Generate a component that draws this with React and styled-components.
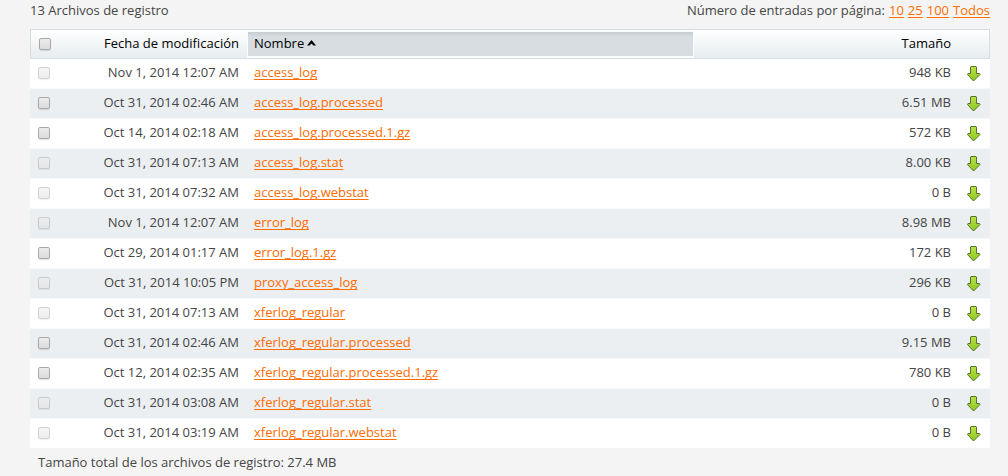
import React from "react";
import styled, { createGlobalStyle } from "styled-components";

const GlobalStyle = createGlobalStyle`
  body {
    margin: 0;
    background: #f4f4f4;
    color: #454545;
    font: 13px/18px "Trebuchet MS", "Open Sans", sans-serif;
  }
`;

const Page = styled.main`
  padding: 1px 18px 0 30px;
`;

const Toolbar = styled.div`
  display: flex;
  justify-content: space-between;
  margin-bottom: 10px;
`;

const Pager = styled.nav`
  display: flex;
  gap: 4px;
`;

const Link = styled.a`
  color: #ff6c00;
  text-decoration: underline;
  text-decoration-skip-ink: none;
  text-underline-offset: 2px;
`;

const Table = styled.table`
  width: 100%;
  table-layout: fixed;
  border-collapse: separate;
  border-spacing: 0;
`;

const Col = styled.col`
  width: ${(p) => p.$width};
`;

const HeadCell = styled.th`
  box-sizing: border-box;
  height: 30px;
  padding: 0 8px 2px 0;
  border: solid #d5dfe3;
  border-width: 1px 0;
  background: linear-gradient(#ffffff, #e7ecef);
  color: #000;
  font-weight: normal;
  text-align: ${(p) => p.$align || "right"};

  &:first-child {
    border-left-width: 1px;
    padding: 0 0 0 8px;
  }

  &:last-child {
    border-right-width: 1px;
  }
`;

const SortedCell = styled(HeadCell)`
  padding: 0;
`;

const SortButton = styled.button`
  display: flex;
  align-items: center;
  gap: 3px;
  box-sizing: border-box;
  width: 100%;
  height: 28px;
  padding: 0 0 2px 6px;
  border: solid #fafbfb;
  border-width: 2px 1px;
  background: linear-gradient(#c6cdd1, #d7dde1 5px);
  color: #000;
  font: inherit;
`;

const Row = styled.tr`
  background: ${(p) => (p.$striped ? "#ebeff2" : "#fff")};
`;

const Cell = styled.td`
  box-sizing: border-box;
  height: 30px;
  padding: ${(p) => p.$padding || "0 8px 3px 0"};
  border-top: 1px solid #f5f7f8;
  text-align: ${(p) => p.$align || "right"};

  tr:first-child > & {
    height: 29px;
    border-top: 0;
  }
`;

const Checkbox = styled.input`
  appearance: none;
  display: block;
  box-sizing: border-box;
  width: 12px;
  height: 12px;
  margin: 0;
  border: 1px solid #a8a8a8;
  border-radius: 2px;
  background: linear-gradient(#ececec, #dcdcdc);
  box-shadow: 0 1px 1px rgba(0, 0, 0, 0.12);

  &:checked {
    background: #666;
  }

  &:disabled {
    opacity: 0.5;
  }
`;

const DownloadButton = styled.button`
  display: block;
  padding: 0;
  border: 0;
  background: none;
`;

const Icon = styled.svg`
  display: block;
`;

const Summary = styled.p`
  margin: 0;
  padding: 5px 8px 0;
`;

const files = [
  ["Nov 1, 2014 12:07 AM", "access_log", "948 KB", true],
  ["Oct 31, 2014 02:46 AM", "access_log.processed", "6.51 MB", false],
  ["Oct 14, 2014 02:18 AM", "access_log.processed.1.gz", "572 KB", false],
  ["Oct 31, 2014 07:13 AM", "access_log.stat", "8.00 KB", true],
  ["Oct 31, 2014 07:32 AM", "access_log.webstat", "0 B", true],
  ["Nov 1, 2014 12:07 AM", "error_log", "8.98 MB", true],
  ["Oct 29, 2014 01:17 AM", "error_log.1.gz", "172 KB", false],
  ["Oct 31, 2014 10:05 PM", "proxy_access_log", "296 KB", true],
  ["Oct 31, 2014 07:13 AM", "xferlog_regular", "0 B", true],
  ["Oct 31, 2014 02:46 AM", "xferlog_regular.processed", "9.15 MB", false],
  ["Oct 12, 2014 02:35 AM", "xferlog_regular.processed.1.gz", "780 KB", false],
  ["Oct 31, 2014 03:08 AM", "xferlog_regular.stat", "0 B", true],
  ["Oct 31, 2014 03:19 AM", "xferlog_regular.webstat", "0 B", true],
];

function DownloadIcon() {
  return (
    <Icon width="14" height="16" viewBox="0 0 14 16" aria-hidden="true">
      <defs>
        <linearGradient id="arrow-fill" x1="0" y1="0" x2="0" y2="1">
          <stop offset="0" stopColor="#b9e04a" />
          <stop offset="1" stopColor="#8cc820" />
        </linearGradient>
      </defs>
      <path
        d="M4 .5H9L9.500 1V7.500H12.500L13 8.500L6.500 15L.5 8.500L1 7.500H3.500V1Z"
        fill="url(#arrow-fill)"
        stroke="#56732a"
      />
    </Icon>
  );
}

export default function App() {
  return (
    <>
      <GlobalStyle />
      <Page>
        <Toolbar>
          <span>13 Archivos de registro</span>
          <Pager>
            <span>Número de entradas por página:</span>
            {["10", "25", "100", "Todos"].map((n) => (
              <Link key={n} href="#">{n}</Link>
            ))}
          </Pager>
        </Toolbar>
        <Table>
          <colgroup>
            <Col $width="32px" />
            <Col $width="185px" />
            <Col />
            <Col $width="265px" />
            <Col $width="31px" />
          </colgroup>
          <thead>
            <tr>
              <HeadCell><Checkbox type="checkbox" aria-label="Seleccionar todo" /></HeadCell>
              <HeadCell>Fecha de modificación</HeadCell>
              <SortedCell aria-sort="ascending">
                <SortButton type="button">
                  Nombre
                  <Icon width="9" height="6" viewBox="0 0 9 6" aria-hidden="true">
                    <path d="M0 5.500L4.500 0L9 5.500H6.500L4.500 3.500L2.500 5.500Z" />
                  </Icon>
                </SortButton>
              </SortedCell>
              <HeadCell>Tamaño</HeadCell>
              <HeadCell />
            </tr>
          </thead>
          <tbody>
            {files.map(([date, name, size, locked], i) => (
              <Row key={name} $striped={i % 2 === 1}>
                <Cell $padding="0 0 2px 8px">
                  <Checkbox type="checkbox" aria-label={name} disabled={locked} />
                </Cell>
                <Cell>{date}</Cell>
                <Cell $align="left" $padding="0 0 3px 7px"><Link href="#">{name}</Link></Cell>
                <Cell>{size}</Cell>
                <Cell $padding="0 0 0 8px">
                  <DownloadButton type="button" aria-label={`Descargar ${name}`}>
                    <DownloadIcon />
                  </DownloadButton>
                </Cell>
              </Row>
            ))}
          </tbody>
        </Table>
        <Summary>Tamaño total de los archivos de registro: 27.4 MB</Summary>
      </Page>
    </>
  );
}
